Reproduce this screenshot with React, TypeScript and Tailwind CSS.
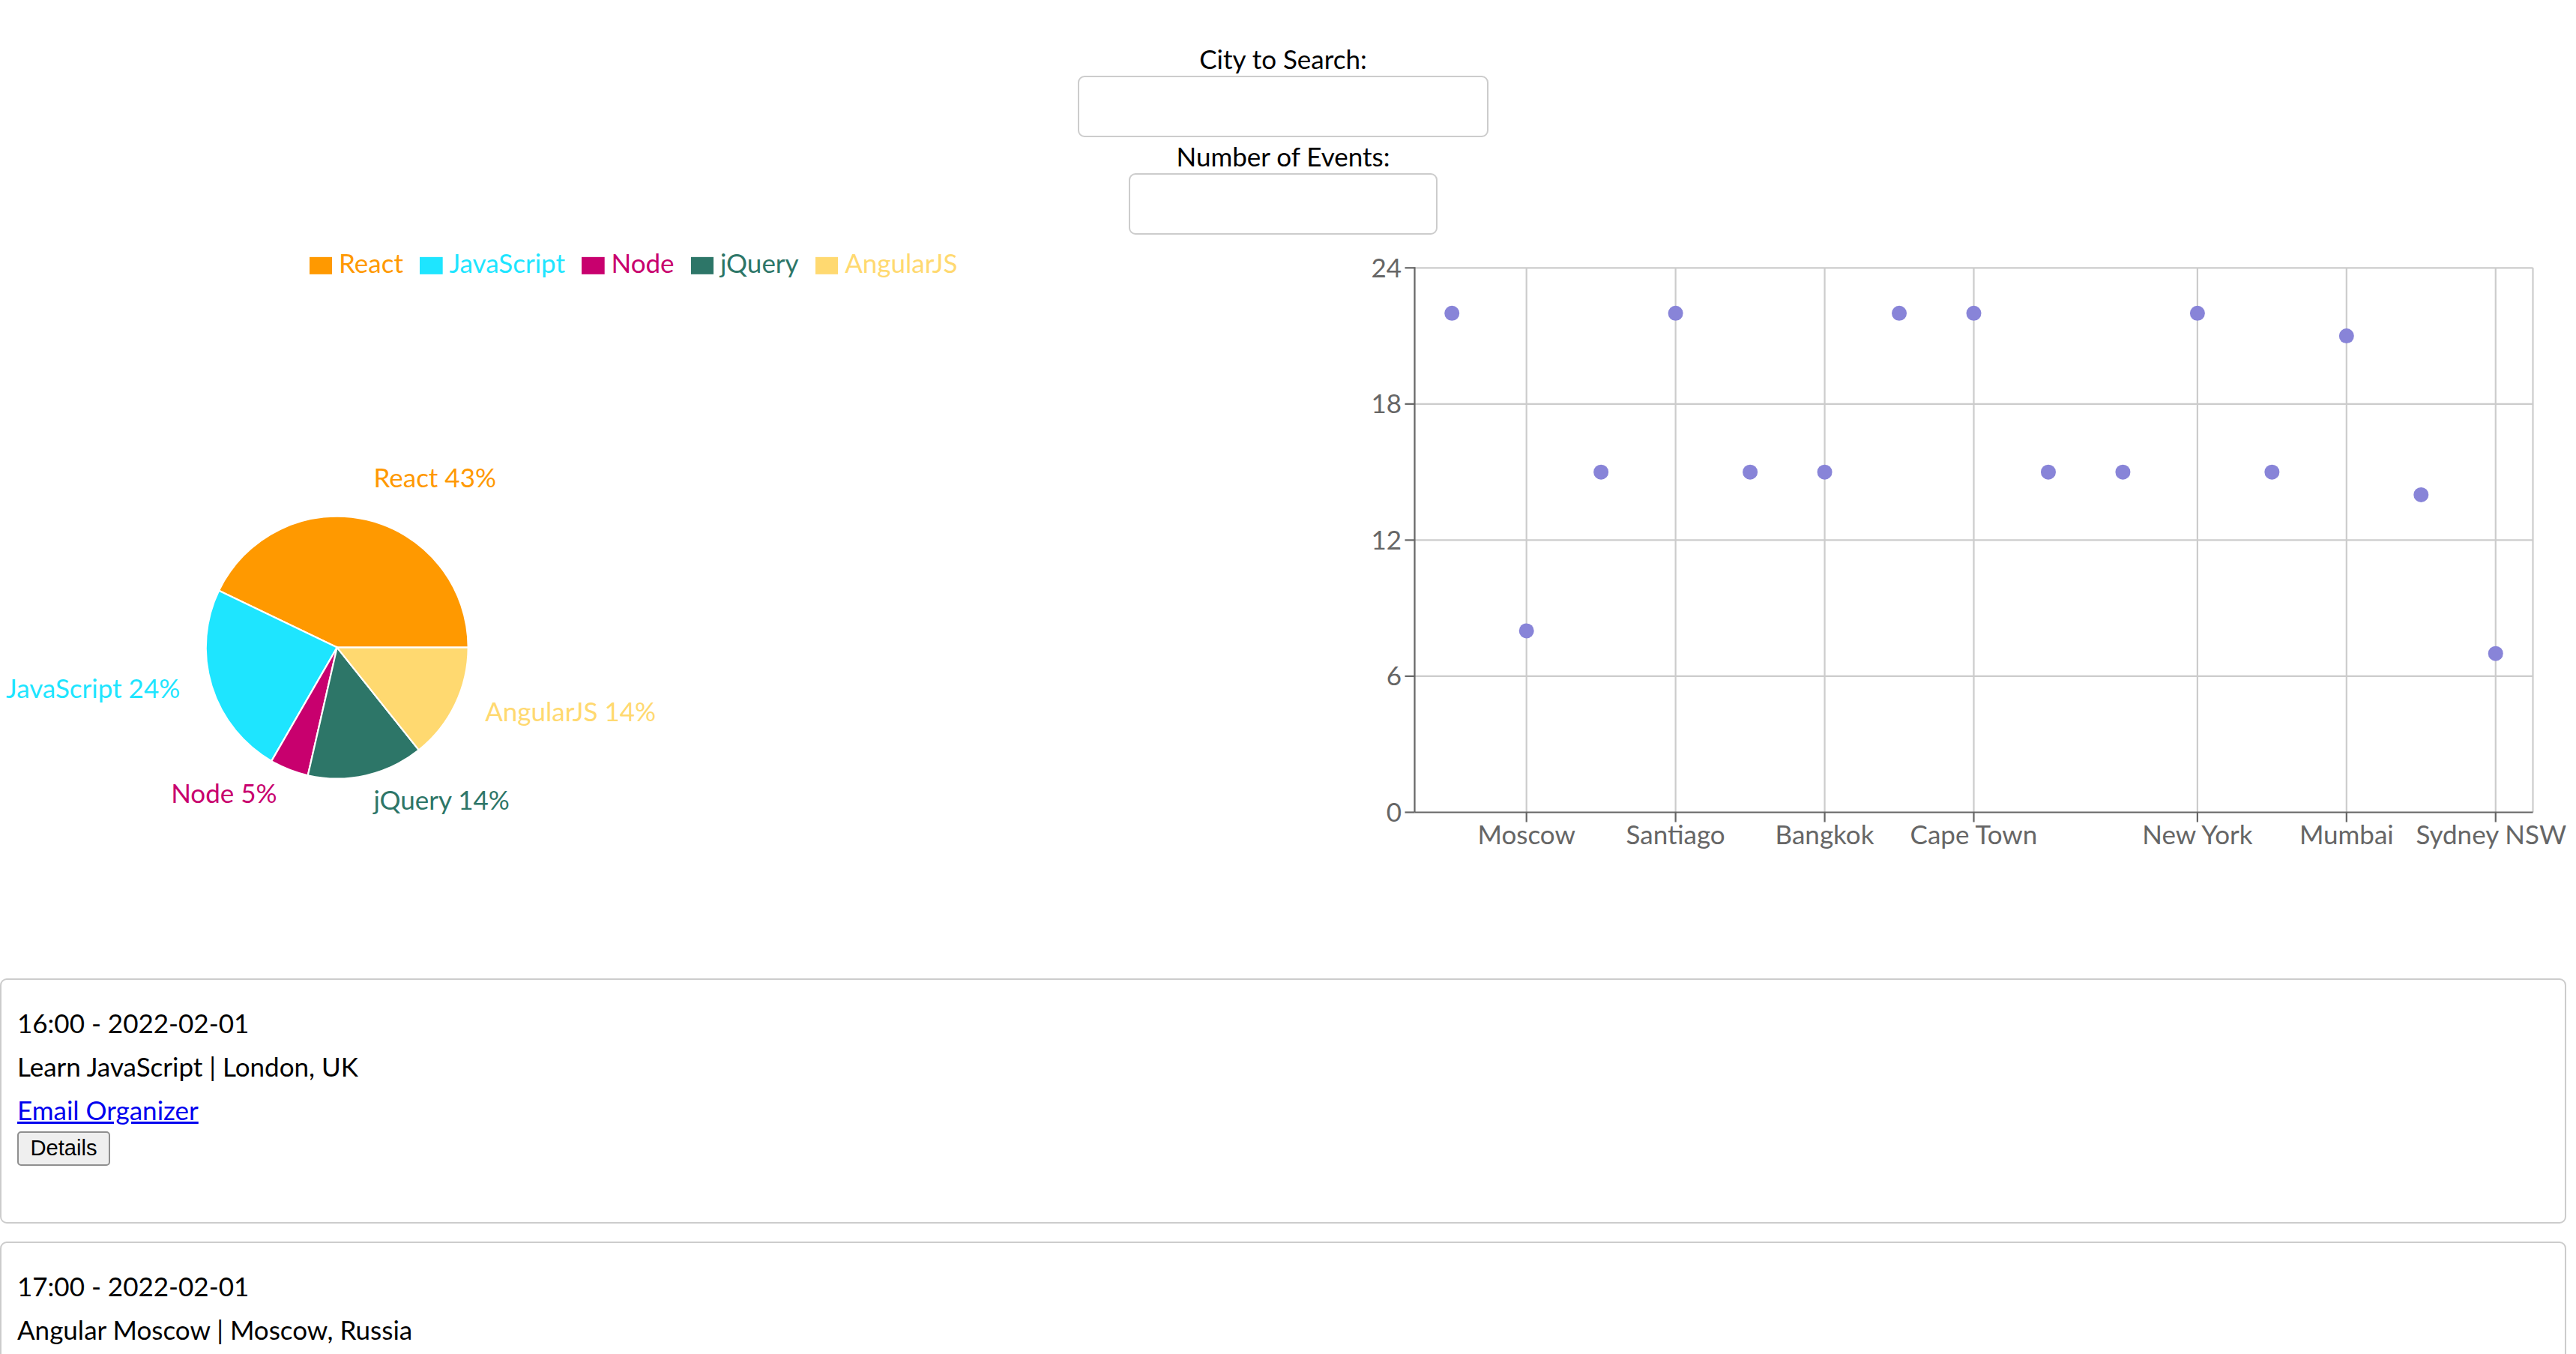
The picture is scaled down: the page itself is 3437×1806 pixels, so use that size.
import React from "react";

const COLORS = ["#ff9900", "#1ee5ff", "#c8006e", "#2d7668", "#ffd970"];
const PIE = [
  { name: "React", value: 9 },
  { name: "JavaScript", value: 5 },
  { name: "Node", value: 1 },
  { name: "jQuery", value: 3 },
  { name: "AngularJS", value: 3 },
];

const CITIES: { name: string; v: number; show: boolean }[] = [
  { name: "London", v: 22, show: false },
  { name: "Moscow", v: 8, show: true },
  { name: "Berlin", v: 15, show: false },
  { name: "Santiago", v: 22, show: true },
  { name: "Dubai", v: 15, show: false },
  { name: "Bangkok", v: 15, show: true },
  { name: "Toronto", v: 22, show: false },
  { name: "Cape Town", v: 22, show: true },
  { name: "Amsterdam", v: 15, show: false },
  { name: "Munich", v: 15, show: false },
  { name: "New York", v: 22, show: true },
  { name: "Singapore", v: 15, show: false },
  { name: "Mumbai", v: 21, show: true },
  { name: "Jakarta", v: 14, show: false },
  { name: "Sydney NSW", v: 7, show: true },
];

const EVENTS = [
  { time: "16:00 - 2022-02-01", title: "Learn JavaScript | London, UK" },
  { time: "17:00 - 2022-02-01", title: "Angular Moscow | Moscow, Russia" },
];

function Legend() {
  return (
    <div className="flex justify-center pt-[14px]">
      {PIE.map((p, i) => (
        <div key={p.name} className="flex items-start mr-[22px]">
          <svg width="30.7" height="30.7" viewBox="0 0 32 32" className="mt-[12px] mr-[8.8px] shrink-0">
            <path d="M0,4h32v24h-32z" fill={COLORS[i]} />
          </svg>
          <span className="text-[35px] leading-[46px]" style={{ color: COLORS[i] }}>
            {p.name}
          </span>
        </div>
      ))}
    </div>
  );
}

function PieChart() {
  const CX = 449.7;
  const CY = 863.6;
  const R = 175;
  const LR = 219.2;
  const total = PIE.reduce((a, b) => a + b.value, 0);
  let start = 0;
  const pt = (a: number, r: number) => {
    const rad = (a * Math.PI) / 180;
    return [CX + r * Math.cos(rad), CY - r * Math.sin(rad)];
  };
  return (
    <svg width={1712} height={800} viewBox="0 373 1712 800" className="block">
      {PIE.map((p, i) => {
        const sweep = (p.value / total) * 360;
        const a0 = start;
        const a1 = start + sweep;
        start = a1;
        const [x0, y0] = pt(a0, R);
        const [x1, y1] = pt(a1, R);
        const large = sweep > 180 ? 1 : 0;
        const mid = (a0 + a1) / 2;
        const [lx, ly] = pt(mid, LR);
        const pct = Math.round((p.value / total) * 100);
        const extra = ly > CY ? 3 : 0;
        return (
          <g key={p.name}>
            <path
              d={`M${CX},${CY} L${x0},${y0} A${R},${R} 0 ${large} 0 ${x1},${y1} Z`}
              fill={COLORS[i]}
              stroke="#ffffff"
              strokeWidth={2.2}
            />
            <text
              x={lx}
              y={ly + extra}
              fill={COLORS[i]}
              fontSize={35}
              fontFamily="Lato, sans-serif"
              textAnchor={lx > CX ? "start" : "end"}
            >
              {`${p.name} ${pct}%`}
            </text>
          </g>
        );
      })}
    </svg>
  );
}

function ScatterChart() {
  const X0 = 1887.5;
  const X1 = 3379.5;
  const Y0 = 1083.5;
  const Y24 = 357.3;
  const band = (X1 - X0) / CITIES.length;
  const xOf = (i: number) => X0 + band * (i + 0.5);
  const yOf = (v: number) => Y0 - ((Y0 - Y24) * v) / 24;
  const sw = 2.2;
  return (
    <svg width={1712} height={860} viewBox="1712 313 1712 860" className="block">
      {[24, 18, 12, 6].map((v) => (
        <line key={v} x1={X0} x2={X1} y1={yOf(v)} y2={yOf(v)} stroke="#cccccc" strokeWidth={sw} />
      ))}
      {CITIES.map((c, i) =>
        c.show ? (
          <line key={c.name} x1={xOf(i)} x2={xOf(i)} y1={Y24} y2={Y0} stroke="#cccccc" strokeWidth={sw} />
        ) : null
      )}
      <line x1={X1} x2={X1} y1={Y24} y2={Y0} stroke="#cccccc" strokeWidth={sw} />
      <line x1={X0} x2={X0} y1={Y24 - 1} y2={Y0} stroke="#666666" strokeWidth={sw} />
      <line x1={X0} x2={X1} y1={Y0} y2={Y0} stroke="#666666" strokeWidth={sw} />
      {[24, 18, 12, 6, 0].map((v) => (
        <g key={v}>
          <line x1={X0 - 13} x2={X0} y1={yOf(v)} y2={yOf(v)} stroke="#666666" strokeWidth={sw} />
          <text
            x={1870}
            y={yOf(v)}
            dy="0.355em"
            textAnchor="end"
            fill="#666666"
            fontSize={35}
            fontFamily="Lato, sans-serif"
          >
            {v}
          </text>
        </g>
      ))}
      {CITIES.map((c, i) =>
        c.show ? (
          <g key={c.name}>
            <line x1={xOf(i)} x2={xOf(i)} y1={Y0} y2={Y0 + 13} stroke="#666666" strokeWidth={sw} />
            <text
              x={i === CITIES.length - 1 ? xOf(i) - 6 : xOf(i)}
              y={Y0 + 17.5}
              dy="0.71em"
              textAnchor="middle"
              fill="#666666"
              fontSize={35}
              fontFamily="Lato, sans-serif"
            >
              {c.name}
            </text>
          </g>
        ) : null
      )}
      {CITIES.map((c, i) => (
        <circle key={c.name} cx={xOf(i)} cy={yOf(c.v)} r={10} fill="#8884d8" />
      ))}
    </svg>
  );
}

function EventCard({ time, title }: { time: string; title: string }) {
  return (
    <div className="border-2 border-[#cccccc] rounded-[9px] pl-[21px] pt-[27.5px] pb-[75.5px]">
      <div className="text-[35px] leading-[58px]">{time}</div>
      <div className="text-[35px] leading-[58px]">{title}</div>
      <div className="text-[35px] leading-[58px]">
        <a href="#" className="text-[#0000ee] underline">
          Email Organizer
        </a>
      </div>
      <button className="block h-[46px] w-[124px] bg-[#efefef] border-2 border-[#8f8f8f] rounded-[5px] text-[29.2px] leading-none text-black font-['Liberation_Sans',Arial,sans-serif]">
        Details
      </button>
    </div>
  );
}

export default function App() {
  return (
    <div className="min-h-screen w-[3424px] bg-white text-black font-['Lato','Segoe_UI',sans-serif]">
      <div className="flex flex-col items-center pt-[55px]">
        <label className="text-[35px] leading-[46px]">City to Search:</label>
        <input type="text" className="w-[548px] h-[82px] border-2 border-[#cccccc] rounded-[9px] bg-white" />
        <label className="mt-[2px] text-[35px] leading-[46px]">Number of Events:</label>
        <input type="number" className="w-[412px] h-[82px] border-2 border-[#cccccc] rounded-[9px] bg-white" />
      </div>
      <div className="flex h-[860px]">
        <div className="w-[1712px] flex flex-col">
          <Legend />
          <PieChart />
        </div>
        <div className="w-[1712px]">
          <ScatterChart />
        </div>
      </div>
      <div className="mt-[132px] flex flex-col gap-[24px]">
        {EVENTS.map((e) => (
          <EventCard key={e.time} time={e.time} title={e.title} />
        ))}
      </div>
    </div>
  );
}
